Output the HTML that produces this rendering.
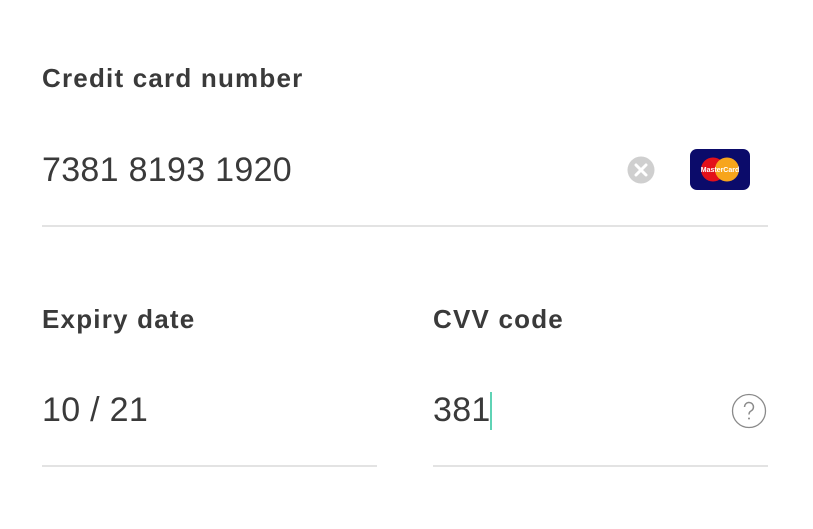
<!DOCTYPE html>
<html><head><style>
body{margin:0;width:813px;height:529px;background:#fff;font-family:"Liberation Sans",sans-serif;position:relative;overflow:hidden}
.a{position:absolute;white-space:nowrap}
.l{font-weight:bold;font-size:26px;letter-spacing:1.2px;color:#3a3a3a;line-height:30px}
.v{font-size:34px;letter-spacing:0.3px;color:#3a3a3a;line-height:40px}
.ln{position:absolute;height:2px;background:#e3e3e3}
</style></head><body>
<div class="a l" style="left:42px;top:63px">Credit card number</div>
<div class="a v" style="left:42px;top:150px">7381 8193 1920</div>
<svg class="a" style="left:627px;top:156px" width="28" height="28" viewBox="0 0 28 28"><circle cx="14" cy="14" r="13.5" fill="#cfcfcf"/><path d="M9 9L19 19M19 9L9 19" stroke="#fff" stroke-width="3" stroke-linecap="round"/></svg>
<svg class="a" style="left:690px;top:149px" width="60" height="41" viewBox="0 0 60 41"><rect width="60" height="41" rx="7" fill="#0b0b6a"/><circle cx="23" cy="20.5" r="12" fill="#e3101a"/><circle cx="37" cy="20.5" r="12" fill="#f7a51c"/><text x="30" y="23" font-size="7" font-weight="bold" fill="#fff" text-anchor="middle" font-family="Liberation Sans">MasterCard</text></svg>
<div class="ln" style="left:42px;top:225px;width:726px"></div>
<div class="a l" style="left:42px;top:304px">Expiry date</div>
<div class="a l" style="left:433px;top:304px">CVV code</div>
<div class="a v" style="left:42px;top:390px">10 / 21</div>
<div class="a v" style="left:433px;top:390px">381</div>
<div class="a" style="left:490px;top:392px;width:2px;height:38px;background:#5fd3b5"></div>
<svg class="a" style="left:731px;top:393px" width="36" height="36" viewBox="0 0 36 36"><circle cx="18" cy="18" r="16.5" fill="none" stroke="#8a8a8a" stroke-width="1.3"/><path d="M13.5 14a4.5 4.5 0 1 1 6.5 4c-1.5.8-2 1.8-2 3.5" fill="none" stroke="#8a8a8a" stroke-width="1.5"/><circle cx="18" cy="25.5" r="1" fill="#8a8a8a"/></svg>
<div class="ln" style="left:42px;top:465px;width:335px"></div>
<div class="ln" style="left:433px;top:465px;width:335px"></div>
</body></html>
